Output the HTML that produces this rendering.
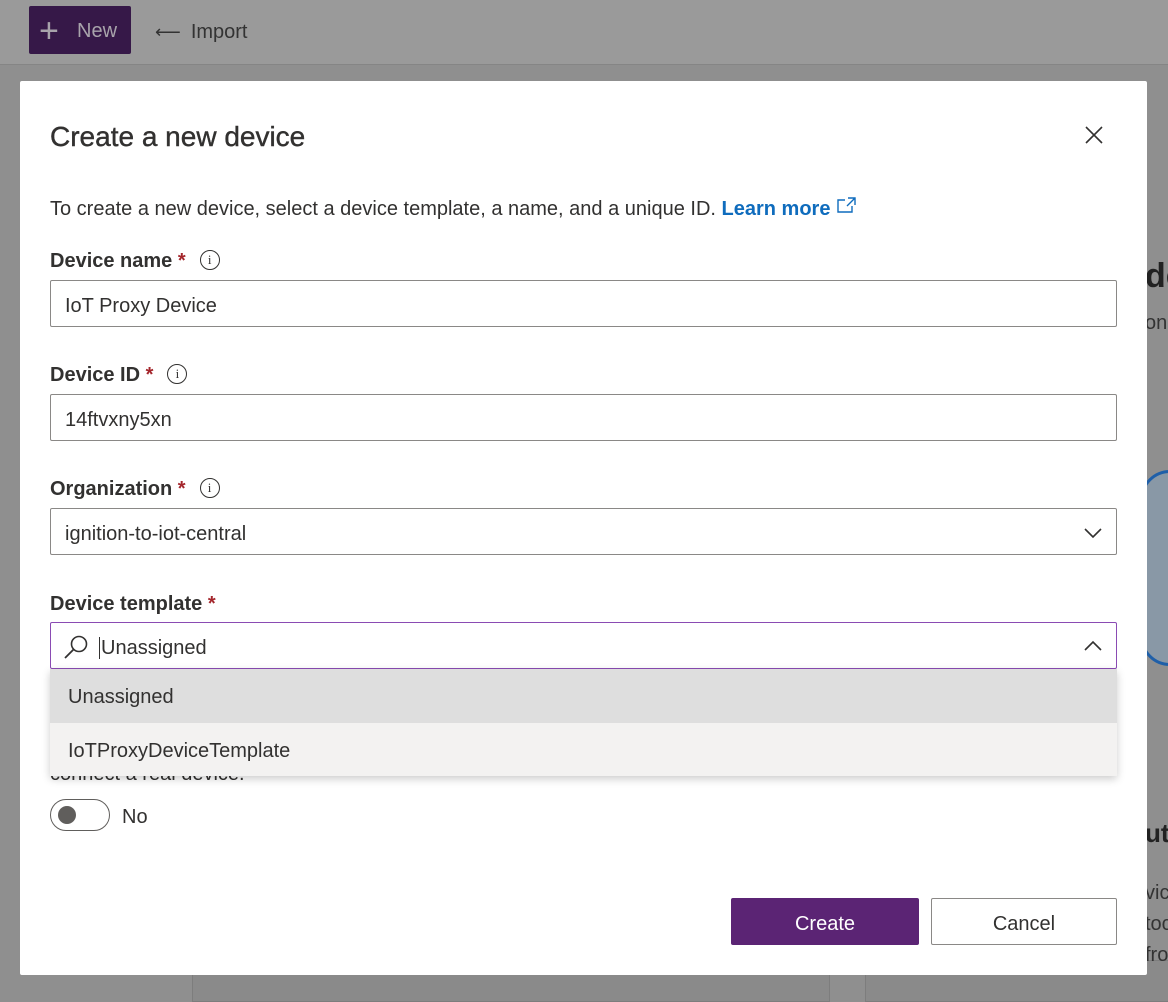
<!DOCTYPE html><html><head><style>
body{margin:0;width:1168px;height:996px;background:#8f8f8f;font-family:"Liberation Sans",sans-serif;position:relative;overflow:hidden;color:#323130}
.top{position:absolute;left:0;top:0;width:1168px;height:64px;background:#9a9a9a;border-bottom:1px solid #858585}
.new{position:absolute;left:29px;top:6px;width:102px;height:48px;background:#361848;border-radius:2px;color:#a8a3ab;font-size:20px;line-height:50px}
.imp{position:absolute;left:155px;top:21px;font-size:20px;color:#333}
.panel{position:absolute;background:#8a8a8a;border:1px solid #7d7d7d}
.modal{position:absolute;left:20px;top:81px;width:1127px;height:894px;background:#fff;border-radius:2px}
.a{position:absolute}
.lbl{font-size:20px;font-weight:bold;color:#323130}
.req{color:#a4262c}
.in{position:absolute;left:30px;width:1067px;height:47px;border:1px solid #8a8886;border-radius:2px;font-size:20px;line-height:50px;padding-left:14px;box-sizing:border-box;color:#323130}
.info{display:inline-block;width:18px;height:18px;border:1.5px solid #323130;border-radius:50%;font-size:13px;line-height:18px;text-align:center;font-weight:normal;vertical-align:3px;margin-left:14px;font-family:"Liberation Serif",serif}
</style></head><body>
<div class="top"><div class="new"><span style="position:absolute;left:10px;top:0;font-size:34px;font-weight:200">+</span><span style="position:absolute;left:48px">New</span></div>
<div class="imp"><span style="font-size:18px;margin-right:10px">⟵</span>Import</div></div>
<div class="panel" style="left:192px;top:960px;width:636px;height:40px"></div>
<div class="panel" style="left:865px;top:960px;width:310px;height:40px"></div>
<div class="a" style="left:1145px;top:257px;font-size:34px;font-weight:bold;color:#222">de</div>
<div class="a" style="left:1145px;top:312px;font-size:20px;color:#333">on</div>
<div class="a" style="left:1145px;top:818px;font-size:26px;font-weight:bold;color:#222">ut</div>
<div class="a" style="left:1145px;top:878px;font-size:20px;color:#333;line-height:31px">vic<br>toc<br>fro</div>
<div class="a" style="left:1140px;top:470px;width:60px;height:190px;border:3px solid #1f5fa8;border-radius:30px;background:#8998a6"></div>
<div class="modal">
<div class="a" style="left:30px;top:40px;font-size:28px;color:#323130;-webkit-text-stroke:0.4px #323130">Create a new device</div>
<svg class="a" style="left:1064px;top:44px" width="20" height="20"><path d="M2 2L18 18M18 2L2 18" stroke="#323130" stroke-width="1.6"/></svg>
<div class="a" style="left:30px;top:116px;font-size:20px">To create a new device, select a device template, a name, and a unique ID. <span style="color:#0f6cbd;font-weight:bold">Learn more</span> <svg width="20" height="16" style="vertical-align:2px"><path d="M12 1h7v7M19 1l-8 8M9 3H2v12h14v-6" stroke="#0f6cbd" fill="none" stroke-width="1.4"/></svg></div>
<div class="a lbl" style="left:30px;top:169px">Device name <span class="req">*</span><span class="info">i</span></div>
<div class="in" style="top:199px">IoT Proxy Device</div>
<div class="a lbl" style="left:30px;top:283px">Device ID <span class="req">*</span><span class="info">i</span></div>
<div class="in" style="top:313px">14ftvxny5xn</div>
<div class="a lbl" style="left:30px;top:397px">Organization <span class="req">*</span><span class="info">i</span></div>
<div class="in" style="top:427px">ignition-to-iot-central<svg class="a" style="right:14px;top:18px" width="18" height="12"><path d="M1 2l8 8 8-8" stroke="#323130" fill="none" stroke-width="1.6"/></svg></div>
<div class="a lbl" style="left:30px;top:512px">Device template <span class="req">*</span></div>
<div class="in" style="top:541px;border-color:#8a4bb3;padding-left:48px"><svg class="a" style="left:12px;top:12px" width="26" height="24"><circle cx="16" cy="9" r="7.5" stroke="#323130" fill="none" stroke-width="1.6"/><path d="M10.5 14.5L2 23" stroke="#323130" stroke-width="1.8"/></svg><span style="border-left:1.5px solid #323130;padding-left:1px">Unassigned</span><svg class="a" style="right:14px;top:17px" width="18" height="12"><path d="M1 10l8-8 8 8" stroke="#323130" fill="none" stroke-width="1.6"/></svg></div>
<div class="a" style="left:30px;top:682px;font-size:20px;color:#323130">connect a real device.</div>
<div class="a" style="left:30px;top:718px;width:58px;height:30px;border:1px solid #605e5c;border-radius:16px"><div class="a" style="left:7px;top:6px;width:18px;height:18px;border-radius:50%;background:#605e5c"></div></div>
<div class="a" style="left:102px;top:725px;font-size:20px">No</div>
<div class="a" style="left:30px;top:588px;width:1067px;height:107px;box-shadow:0 3px 8px rgba(0,0,0,.2);background:#f3f2f1">
<div style="height:54px;background:#dedede;line-height:56px;padding-left:18px;font-size:20px">Unassigned</div>
<div style="height:53px;line-height:56px;padding-left:18px;font-size:20px">IoTProxyDeviceTemplate</div></div>
<div class="a" style="left:711px;top:817px;width:188px;height:47px;background:#5b2474;color:#fff;font-size:20px;line-height:52px;text-align:center;border-radius:2px">Create</div>
<div class="a" style="left:911px;top:817px;width:186px;height:47px;border:1px solid #8a8886;box-sizing:border-box;font-size:20px;line-height:50px;text-align:center;border-radius:2px">Cancel</div>
</div>
</body></html>
